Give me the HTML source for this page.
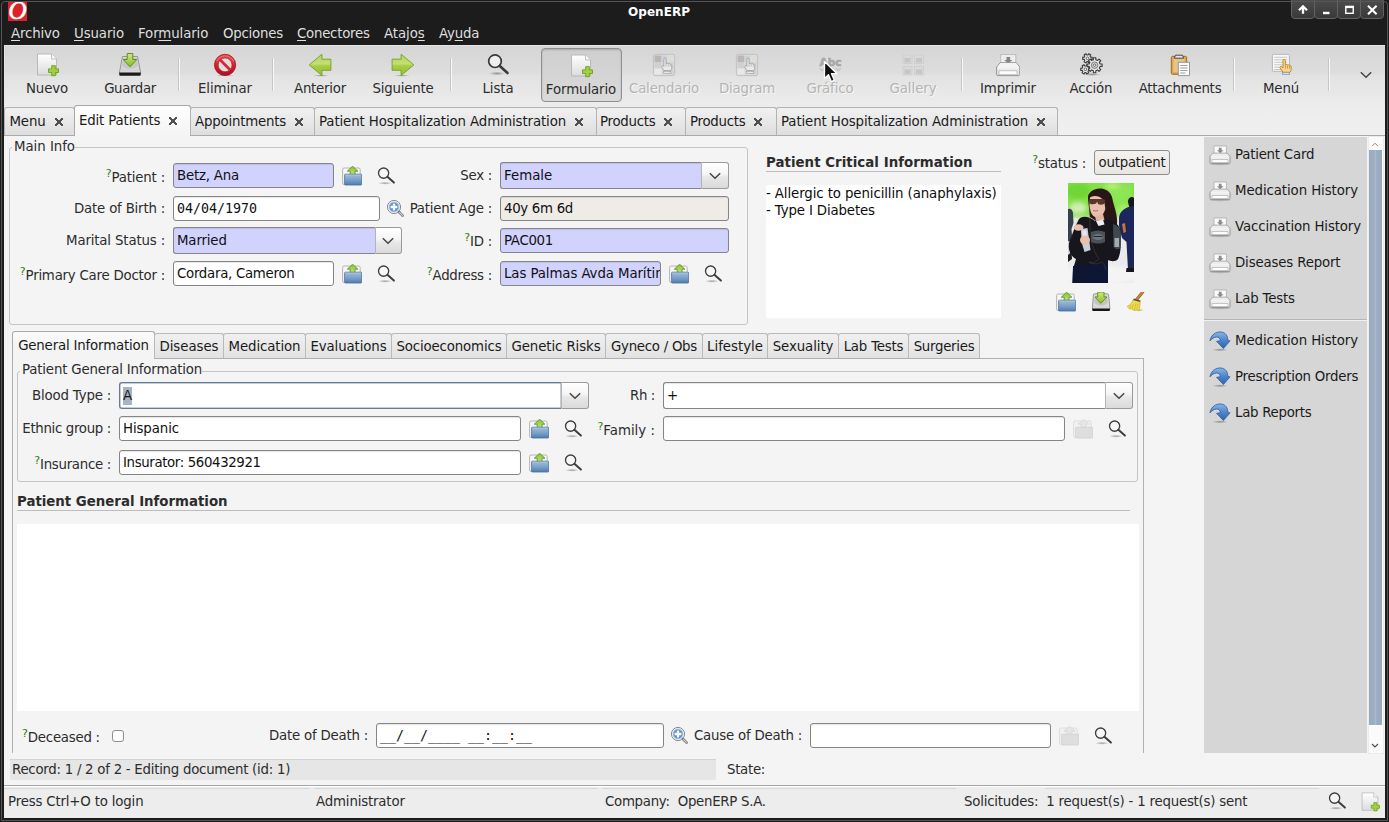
<!DOCTYPE html>
<html lang="es">
<head>
<meta charset="utf-8">
<title>OpenERP</title>
<style>
html,body{margin:0;padding:0}
body{width:1389px;height:822px;overflow:hidden;background:#1c1c1c;position:relative;font-family:"DejaVu Sans","Liberation Sans",sans-serif;font-size:13.33px;color:#1a1a1a;letter-spacing:0;word-spacing:0}
.a{position:absolute}
.t{position:absolute;white-space:nowrap;line-height:16px;height:16px;margin-top:1px;color:#2c2c2c}
.r{text-align:right}
.b{font-weight:bold}
.q{color:#2b7d12;font-size:11px;position:relative;top:-5px;letter-spacing:0}
#win{position:absolute;left:4px;top:45px;width:1381px;height:773px;background:#f4f4f4}
/* menubar */
.mi{position:absolute;top:26px;color:#dfdfdf;white-space:nowrap;line-height:16px}
.mi u{text-decoration:underline;text-underline-offset:1.500px}
/* toolbar */
#tb{position:absolute;left:4px;top:45px;width:1381px;height:91px;box-shadow:inset 1px 1px 0 #e6e6e6;background:linear-gradient(#d5d5d5 0,#dedede 29px,#e2e2e2 30px,#ececec 60px,#f0f0f0 91px)}
.tl{position:absolute;top:79px;width:120px;text-align:center;white-space:nowrap;line-height:17px;color:#2c2c2c}
.tl.d{color:#b4b4b4;text-shadow:1px 1px 0 #f6f6f6}
.sep{position:absolute;top:58px;width:1px;height:33px;background:#c6c6c6;box-shadow:1px 0 0 #f8f8f8}
/* tabs */
.tab{position:absolute;top:107px;height:28px;box-sizing:border-box;border:1px solid #b3b3b3;border-bottom:none;border-radius:3px 3px 0 0;background:linear-gradient(#f1f1f1,#dedede)}
.tab.act{top:105px;height:31px;background:linear-gradient(#fdfdfd,#f4f4f4);border-color:#a9a9a9}
.tab{white-space:nowrap;padding:6px 0 0 4px;line-height:16px}
.tab span{white-space:nowrap;line-height:16px}
.tab.act{padding-top:7px}
.tab i{display:inline-block;vertical-align:top;margin:4px 0 0 9px;opacity:.9;width:8px;height:8px;background:linear-gradient(45deg,transparent 43%,#404040 43%,#404040 57%,transparent 57%),linear-gradient(-45deg,transparent 43%,#404040 43%,#404040 57%,transparent 57%)}

/* inputs */
.in{position:absolute;box-sizing:border-box;border:1px solid #858585;border-radius:3px;background:#fff;box-shadow:inset 0 1px 1px rgba(0,0,0,.10)}
.in.p{background:#d2d2ff}
.in.g{background:#efebe7}
.in span{position:absolute;left:3px;top:4px;white-space:nowrap;line-height:16px;color:#101010}
.cb{position:absolute;box-sizing:border-box;border:1px solid #9a9a9a;border-left-color:#b5b5b5;border-radius:0 3px 3px 0;background:linear-gradient(#ffffff 0,#f5f5f5 45%,#e8e8e8 55%,#dadada 100%)}
.fr{position:absolute;box-sizing:border-box;border:1px solid #c4c4c4;border-radius:3px}
.nt{position:absolute;top:333px;padding-top:2px;height:25px;box-sizing:border-box;border:1px solid #b9b9b9;border-bottom:none;border-radius:3px 3px 0 0;background:linear-gradient(#f0f0f0,#e2e2e2);text-align:center;line-height:22px;white-space:nowrap}
.nt.act{top:331px;height:28px;background:linear-gradient(#fbfbfb,#f4f4f4 60%);line-height:24px;border-color:#aaa}
.sb{position:absolute;left:1235px;white-space:nowrap;line-height:16px;margin-top:1px}
</style>
</head>
<body>
<svg width="0" height="0" style="position:absolute">
<defs>
<linearGradient id="gfold" x1="0" y1="0" x2="0" y2="1"><stop offset="0" stop-color="#b2c8e0"/><stop offset=".12" stop-color="#9ab7d8"/><stop offset=".55" stop-color="#7a9fc8"/><stop offset="1" stop-color="#507cae"/></linearGradient>
<linearGradient id="ggrn" x1="0" y1="0" x2="0" y2="1"><stop offset="0" stop-color="#84c030"/><stop offset="1" stop-color="#d0e57a"/></linearGradient>
<linearGradient id="ggrn2" x1="0" y1="0" x2="0" y2="1"><stop offset="0" stop-color="#d2e87c"/><stop offset="1" stop-color="#86bd2c"/></linearGradient>
<linearGradient id="gpap" x1="0" y1="0" x2="0" y2="1"><stop offset="0" stop-color="#ffffff"/><stop offset="1" stop-color="#dcdcdc"/></linearGradient>
<linearGradient id="gjump" x1="0" y1="0" x2="0" y2="1"><stop offset="0" stop-color="#86b6ea"/><stop offset=".5" stop-color="#4f86cc"/><stop offset="1" stop-color="#2f62a8"/></linearGradient>
<linearGradient id="gred" x1="0" y1="0" x2="0" y2="1"><stop offset="0" stop-color="#ec4a4a"/><stop offset=".55" stop-color="#d4202c"/><stop offset="1" stop-color="#ad0e26"/></linearGradient>
<linearGradient id="ggrn3" x1="0" y1="0" x2="0" y2="1"><stop offset="0" stop-color="#b5d354"/><stop offset=".45" stop-color="#c6de72"/><stop offset=".55" stop-color="#a9cb45"/><stop offset="1" stop-color="#98bf36"/></linearGradient>
<radialGradient id="gsh"><stop offset="0" stop-color="#000" stop-opacity=".35"/><stop offset="1" stop-color="#000" stop-opacity="0"/></radialGradient>
<symbol id="folder" viewBox="0 0 20 20">
 <rect x=".6" y="2" width="17.600" height="16.500" rx="1.500" fill="#f6f6f6" stroke="#aeaeae" stroke-width=".9"/>
 <path d="M10.600 .2 L15.900 5.200 H13 V9.500 H8.200 V5.200 H5.300 Z" fill="url(#ggrn)" stroke="#4f8f14" stroke-width=".8" stroke-linejoin="round"/>
 <path d="M3.300 8.200 H19 a.7 .7 0 0 1 .7 .7 V18.300 a.7 .7 0 0 1 -.7 .7 H3.300 a.7 .7 0 0 1 -.7 -.7 V8.900 a.7 .7 0 0 1 .7 -.7Z" fill="url(#gfold)" stroke="#46709f" stroke-width=".8"/>
 <path d="M3.300 9.100 H19" stroke="#b9d0ea" stroke-width=".7" opacity=".8"/>
</symbol>
<symbol id="folderd" viewBox="0 0 20 20">
 <rect x=".6" y="2" width="17.600" height="16.500" rx="1.500" fill="#f1f1f1" stroke="#dadada" stroke-width=".9"/>
 <path d="M10.600 .3 L16.200 5.200 H13 V9.500 H8.200 V5.200 H5 Z" fill="#e6e6e6" stroke="#d6d6d6" stroke-width=".7"/>
 <path d="M3.300 8.200 H19 a.7 .7 0 0 1 .7 .7 V18.300 a.7 .7 0 0 1 -.7 .7 H3.300 a.7 .7 0 0 1 -.7 -.7 V8.900 a.7 .7 0 0 1 .7 -.7Z" fill="#dedede" stroke="#d0d0d0" stroke-width=".8"/>
</symbol>
<symbol id="find" viewBox="0 0 20 20">
 <ellipse cx="9" cy="17.200" rx="7" ry="1.500" fill="url(#gsh)"/>
 <circle cx="7.600" cy="7.100" r="5.100" fill="#f8f8f8" fill-opacity=".8" stroke="#3e3e3e" stroke-width="1.350"/>
 <path d="M11.400 10.800 L17.900 16.600" stroke="#3e3e3e" stroke-width="2" stroke-linecap="round"/>
</symbol>
<symbol id="zoomp" viewBox="0 0 18 18">
 <circle cx="8" cy="8" r="6.600" fill="#eef2f8" stroke="#8a8a8a" stroke-width="1"/>
 <circle cx="8" cy="8" r="4.800" fill="#5d8fd0"/>
 <circle cx="8" cy="8" r="4.800" fill="none" stroke="#9cbbe6" stroke-width=".8"/>
 <path d="M8 4.600v6.800M4.600 8h6.800" stroke="#fff" stroke-width="2.300"/>
 <path d="M13 13 L16.600 16.600" stroke="#757575" stroke-width="2.600" stroke-linecap="round"/>
 <path d="M13.300 13.300 L16.400 16.400" stroke="#d2d2d2" stroke-width="1.100" stroke-linecap="round"/>
</symbol>
<symbol id="chev" viewBox="0 0 12 8"><path d="M0.800 1.200 L6 6.200 L11.200 1.200" fill="none" stroke="#454545" stroke-width="1.500"/></symbol>
<symbol id="print" viewBox="0 0 24 24">
 <path d="M4.800 1.700h15v10.500h-15z" fill="#fbfbfb" stroke="#b0b0b0" stroke-width=".9"/>
 <path d="M6 3h12.600v7h-12.600z" fill="#ececec"/>
 <path d="M10.500 4h3.600v3h2.300L12.300 10.600 8.200 7h2.300z" fill="#858585"/>
 <path d="M.6 14 L4.200 9.700 H20.300 L23.800 14 V21.300 a1.300 1.300 0 0 1 -1.300 1.300 H1.900 a1.300 1.300 0 0 1 -1.300 -1.300z" fill="url(#gpap)" stroke="#8a8a8a" stroke-width=".9"/>
 <path d="M4.500 10.300 H20 L22.800 13.700 H1.700z" fill="#f4f4f4"/>
 <path d="M3 17.700h18v4h-18z" fill="#fdfdfd" stroke="#b4b4b4" stroke-width=".8"/>
</symbol>
<symbol id="jump" viewBox="0 0 24 24">
 <ellipse cx="12" cy="21.800" rx="8" ry="1.500" fill="url(#gsh)"/>
 <path d="M2 12.800 C3 6 9 3.500 13 4 C17.500 4.500 20 8 19.800 12.600 L22 12.800 L15.400 20.600 L8.600 13.300 L12.300 12.800 C12.500 10.500 10.500 8.800 8.500 9 C6 9.200 3.500 10.800 2 12.800 Z" fill="url(#gjump)" stroke="#2c5c9f" stroke-width=".8" stroke-linejoin="round"/>
</symbol>

<symbol id="newdoc" viewBox="0 0 24 24">
 <path d="M2.500 1 H16.500 L21.500 6 V22 H2.500 Z" fill="url(#gpap)" stroke="#b4b4b4" stroke-width=".9"/>
 <path d="M16.500 1 V6 H21.500" fill="#f6f6f6" stroke="#b4b4b4" stroke-width=".8"/>
 <path d="M16.700 12.700 h3.600 v3.200 h3.200 v3.600 h-3.200 v3.200 h-3.600 v-3.200 h-3.200 v-3.600 h3.200 z" fill="#a4d040" stroke="#66a018" stroke-width=".9"/>
</symbol>
<symbol id="save" viewBox="0 0 24 24">
 <path d="M4.500 3.500 H19.500 L22.500 19 V21 H1.500 V19 Z" fill="#d8d8d8" stroke="#8e8e8e" stroke-width=".9"/>
 <path d="M5.500 5 H18.500 L20.800 17.500 H3.200 Z" fill="#c6c6c6"/>
 <path d="M4 12 C6 17 18 17 20 12 L20.800 17.500 H3.200z" fill="#d6d6d6"/>
 <path d="M1.300 19.500 H22.700 V22 a.8 .8 0 0 1 -.8 .8 H2.100 a.8 .8 0 0 1 -.8 -.8 Z" fill="#1a1a1a"/>
 <path d="M9.200 0.500 H14.800 V6.500 H18.800 L12 13.800 L5.200 6.500 H9.200 Z" fill="url(#ggrn2)" stroke="#4e8a0e" stroke-width=".9"/>
</symbol>
<symbol id="stop" viewBox="0 0 24 24">
 <ellipse cx="12" cy="22.300" rx="9" ry="1.300" fill="url(#gsh)"/>
 <circle cx="12.100" cy="11.900" r="10.600" fill="url(#gred)" stroke="#a40d20" stroke-width=".8"/>
 <circle cx="12.100" cy="11.900" r="6.900" fill="#dedede" stroke="#b81224" stroke-width=".6"/>
 <path d="M7.300 7 L17 16.700" stroke="#d42a33" stroke-width="2.800"/>
 <path d="M3.600 8.500 A9.300 9.300 0 0 1 20.600 8.500" fill="none" stroke="#f58a8a" stroke-width="1.100" opacity=".6"/>
</symbol>
<symbol id="aleft" viewBox="0 0 24 24">
 <ellipse cx="13" cy="22.600" rx="8" ry="1.100" fill="url(#gsh)"/>
 <path d="M1.200 11.900 L13.900 1.200 V6.200 H22.900 V17.300 H13.900 V22.500 Z" fill="url(#ggrn3)" stroke="#6da420" stroke-width=".9" stroke-linejoin="round"/>
</symbol>
<symbol id="aright" viewBox="0 0 24 24">
 <ellipse cx="11" cy="22.600" rx="8" ry="1.100" fill="url(#gsh)"/>
 <path d="M22.800 11.900 L10.100 1.200 V6.200 H1.100 V17.300 H10.100 V22.500 Z" fill="url(#ggrn3)" stroke="#6da420" stroke-width=".9" stroke-linejoin="round"/>
</symbol>
<symbol id="find24" viewBox="0 0 24 24">
 <ellipse cx="11" cy="20.500" rx="8" ry="1.800" fill="url(#gsh)"/>
 <circle cx="9" cy="8.200" r="6.300" fill="#f4f4f4" fill-opacity=".75" stroke="#3a3a3a" stroke-width="1.700"/>
 <path d="M13.800 13 L21.500 20" stroke="#3a3a3a" stroke-width="2.600" stroke-linecap="round"/>
</symbol>
<symbol id="gridhand" viewBox="0 0 24 24">
 <rect x="1.400" y="1.400" width="21.200" height="21.200" rx="1.800" fill="#dedede" stroke="#bdbdbd" stroke-width=".9"/>
 <rect x="2.500" y="2.500" width="6.500" height="6.500" fill="#bdb5b5"/><rect x="9" y="2.500" width="6.500" height="6.500" fill="#cdd0d4"/><rect x="15.500" y="2.500" width="6" height="6.500" fill="#deded8"/>
 <rect x="2.500" y="9" width="6.500" height="6.500" fill="#d0d0d0"/><rect x="9" y="9" width="6.500" height="6.500" fill="#d8d8d8"/><rect x="15.500" y="9" width="6" height="6.500" fill="#d2d4d0"/>
 <rect x="2.500" y="15.500" width="6.500" height="6" fill="#e8e8e8"/><rect x="9" y="15.500" width="6.500" height="6" fill="#dcdedc"/><rect x="15.500" y="15.500" width="6" height="6" fill="#d0d2d4"/>
 <path d="M11.800 6.300 a1.100 1.100 0 0 1 2.200 0 V10.600 l1 -.3 a1 1 0 0 1 1.300 .6 l.8 -.2 a1 1 0 0 1 1.300 .7 l.4 0 a1 1 0 0 1 1 1 V15 a3.500 3.500 0 0 1 -1.300 2.600 H11.800 L9.600 13.800 a1 1 0 0 1 1.500 -1.100 l.7 .8 z" fill="#e9e9e9" stroke="#a3a3a3" stroke-width=".9" stroke-linejoin="round"/>
 <path d="M14 10.800v3M16.200 11v2.800M18.200 11.800v2" stroke="#b0b0b0" stroke-width=".7"/>
 <rect x="11.300" y="18.300" width="7.500" height="2" fill="#efefef" stroke="#a9a9a9" stroke-width=".8"/>
</symbol>
<symbol id="gallery" viewBox="0 0 24 24">
 <g fill="#d9d9d9" stroke="#cdcdcd" stroke-width=".8">
 <rect x="2" y="2" width="9" height="8.500"/><rect x="13.500" y="2" width="9" height="8.500"/>
 <rect x="2" y="13.500" width="9" height="8.500"/><rect x="13.500" y="13.500" width="9" height="8.500"/></g>
 <g fill="#c6c6c6"><rect x="3.500" y="5" width="6" height="4.500"/><rect x="15" y="5" width="6" height="4.500"/><rect x="3.500" y="16.500" width="6" height="4.500"/><rect x="15" y="16.500" width="6" height="4.500"/></g>
</symbol>
<symbol id="gears" viewBox="0 0 24 24">
 <ellipse cx="13" cy="21.500" rx="9" ry="1.500" fill="url(#gsh)"/>
 <g fill="#e9e9e9" stroke="#3a3a3a" stroke-width="1.100" stroke-linejoin="round">
  <path d="M11.62 4.22 L13.06 4.14 L13.06 6.46 L11.62 6.38 L10.95 7.55 L11.73 8.76 L9.73 9.91 L9.07 8.63 L7.73 8.63 L7.07 9.91 L5.07 8.76 L5.85 7.55 L5.18 6.38 L3.74 6.46 L3.74 4.14 L5.18 4.22 L5.85 3.05 L5.07 1.84 L7.07 0.69 L7.73 1.97 L9.07 1.97 L9.73 0.69 L11.73 1.84 L10.95 3.05Z"/>
  <path d="M9.62 15.22 L11.06 15.14 L11.06 17.46 L9.62 17.38 L8.95 18.55 L9.73 19.76 L7.73 20.91 L7.07 19.63 L5.73 19.63 L5.07 20.91 L3.07 19.76 L3.85 18.55 L3.18 17.38 L1.74 17.46 L1.74 15.14 L3.18 15.22 L3.85 14.05 L3.07 12.84 L5.07 11.69 L5.73 12.97 L7.07 12.97 L7.73 11.69 L9.73 12.84 L8.95 14.05Z"/>
  <path d="M21.07 11.00 L23.10 10.97 L23.10 13.43 L21.07 13.40 L20.32 15.22 L21.77 16.64 L20.04 18.37 L18.62 16.92 L16.80 17.67 L16.83 19.70 L14.37 19.70 L14.40 17.67 L12.58 16.92 L11.16 18.37 L9.43 16.64 L10.88 15.22 L10.13 13.40 L8.10 13.43 L8.10 10.97 L10.13 11.00 L10.88 9.18 L9.43 7.76 L11.16 6.03 L12.58 7.48 L14.40 6.73 L14.37 4.70 L16.83 4.70 L16.80 6.73 L18.62 7.48 L20.04 6.03 L21.77 7.76 L20.32 9.18Z"/>
 </g>
 <circle cx="8.400" cy="5.300" r="1.300" fill="#fafafa" stroke="#414141" stroke-width=".8"/>
 <circle cx="6.400" cy="16.300" r="1.300" fill="#fafafa" stroke="#414141" stroke-width=".8"/>
 <circle cx="15.600" cy="12.200" r="3.300" fill="#cfcfcf" stroke="#6a6a6a" stroke-width=".8"/>
 <circle cx="15.600" cy="12.200" r="1.200" fill="#fafafa" stroke="#414141" stroke-width=".7"/>
</symbol>
<symbol id="clip" viewBox="0 0 24 24">
 <rect x="3.300" y="3.300" width="15.400" height="18" rx="1.500" fill="#d9a556" stroke="#a66e14" stroke-width="1"/>
 <rect x="5.300" y="5.300" width="11.400" height="14" fill="#e6c488"/>
 <path d="M7.500 2.200 h7 l1.200 3 h-9.400z" fill="#e4e4e4" stroke="#4a4a4a" stroke-width="1"/>
 <path d="M10.300 9.300 H21.500 V22.600 H10.300 Z" fill="#fafafa" stroke="#8e8e8e" stroke-width=".9"/>
 <path d="M12.300 12.500h7.200M12.300 15h7.200M12.300 17.500h7.200M12.300 20h5" stroke="#a0a0a0" stroke-width="1"/>
</symbol>
<symbol id="menuic" viewBox="0 0 24 24">
 <rect x="3.400" y="1.300" width="17" height="17" rx="1.200" fill="#f7f7f7" stroke="#b0b0b0" stroke-width=".9"/>
 <path d="M5.300 4.300h13M5.300 6.800h13M5.300 9.300h13M5.300 11.800h13M5.300 14.300h13M5.300 16.500h13" stroke="#c6c9c2" stroke-width="1.100"/>
 <rect x="13.500" y="17.500" width="7" height="3.800" fill="#e6eefa" stroke="#6f9ddc" stroke-width=".9"/>
 <path d="M14 7.600 a1.200 1.200 0 0 1 2.400 0 V11.800 l1 -.3 a1 1 0 0 1 1.300 .6 l.8 -.2 a1 1 0 0 1 1.300 .7 l.4 0 a1 1 0 0 1 1 1 V16.500 a3.500 3.500 0 0 1 -1.300 2.800 H14.200 L11 14.900 a1.100 1.100 0 0 1 1.700 -1.300 l1.300 1.300 z" fill="#f3d49a" stroke="#c98a24" stroke-width="1" stroke-linejoin="round"/>
 <path d="M16.400 12v3.600M18.500 12.300v3.300M20.500 13v2.600" stroke="#c98a24" stroke-width=".8"/>
</symbol>
<symbol id="abc" viewBox="0 0 24 24">
 <text x="1.500" y="12.500" font-family="DejaVu Sans, Liberation Sans, sans-serif" font-weight="bold" font-size="10.500" fill="#ababab" stroke="#a2a2a2" stroke-width=".5">Abc</text>
 <path d="M1.500 15 l2.800 2.500 l2.800 -2.500 M10 15 l2.800 2.500 l2.800 -2.500 M17.500 15 l2.800 2.500 l2.800 -2.500" fill="none" stroke="#c6c6c6" stroke-width="1.600"/>
</symbol>
<symbol id="printsm" viewBox="0 0 22 22">
 <ellipse cx="11" cy="19" rx="10" ry="1.200" fill="#000" opacity=".18"/>
 <path d="M5 1h12.400v9h-12.400z" fill="#fbfbfb" stroke="#b2b2b2" stroke-width=".9"/>
 <path d="M9.800 2.800h2.800v2.500h2L11.200 8.200 8 5.300h1.800z" fill="#8c8c8c"/>
 <path d="M1 11.500 L4 8.200 H18 L21 11.500 V17.500 a1 1 0 0 1 -1 1 H2 a1 1 0 0 1 -1 -1z" fill="url(#gpap)" stroke="#8e8e8e" stroke-width=".9"/>
 <path d="M4 8.700 H18 L20 11 H2z" fill="#ededed"/>
 <path d="M3 14.500h16v3h-16z" fill="#fdfdfd" stroke="#b9b9b9" stroke-width=".8"/>
</symbol>
<symbol id="savesm" viewBox="0 0 20 20">
 <path d="M3.600 1.800 H16.400 a1.200 1.200 0 0 1 1.200 1 L18.800 15 V17.500 H1.500 V15 L2.400 2.800 a1.200 1.200 0 0 1 1.200 -1z" fill="#d9d9d9" stroke="#909090" stroke-width=".9"/>
 <path d="M4 4 H16 L17.300 14.500 H2.800 Z" fill="#c4c4c4"/>
 <path d="M3.300 10 C5 15 15 15 16.800 10 L17.300 14.500 H2.800z" fill="#dcdcdc"/>
 <path d="M1.300 16.500 H18.900 V18.300 a.7 .7 0 0 1 -.7 .7 H2 a.7 .7 0 0 1 -.7 -.7 Z" fill="#161616"/>
 <path d="M6.700 0 H13 V5 H15.900 L9.900 11.400 L4 5 H6.700 Z" fill="url(#ggrn2)" stroke="#4e8a0e" stroke-width=".8" stroke-linejoin="round"/>
</symbol>
<symbol id="broom" viewBox="0 0 20 20">
 <ellipse cx="14" cy="18" rx="5" ry="1.200" fill="url(#gsh)"/>
 <path d="M17.900 -.2 L11.300 8" stroke="#9a5c12" stroke-width="3" stroke-linecap="round"/>
 <path d="M17.900 -.2 L11.300 8" stroke="#cd8a2e" stroke-width="1.800" stroke-linecap="round"/>
 <path d="M8.200 7.600 L15.200 9.600 L14.300 18.800 L11.500 17.800 L9 18.600 L6.800 16.800 L4.500 17 L2.200 14.400 C5.500 12.800 7.300 10.500 8.200 7.600z" fill="#eddb52" stroke="#c8ad22" stroke-width=".7" stroke-linejoin="round"/>
 <path d="M6 13.500L4.800 16.500M8.500 12L7 16.500M11 11.500L9.300 18M13 11.500L11.800 17.500" stroke="#cdb42c" stroke-width=".7"/>
 <path d="M8.500 7.300 L15.300 9.300" stroke="#505050" stroke-width="1.700"/>
</symbol>
</defs>
</svg>

<!-- titlebar -->
<div class="a" style="left:8px;top:2px;width:19px;height:19px;background:#d9222a"></div>
<div class="t" style="left:8px;top:0;width:19px;height:22px;line-height:22px;text-align:center;color:#fff;font-family:'Liberation Serif','DejaVu Serif',serif;font-style:italic;font-size:25.500px;letter-spacing:0;margin-top:0;-webkit-text-stroke:.6px #fff">O</div>
<div class="t b" style="left:594px;top:3px;width:130px;text-align:center;color:#fff;font-size:12px;letter-spacing:0.042px">OpenERP</div>
<div class="a" style="left:1291px;top:-2px;width:24px;height:21px;box-sizing:border-box;border:1px solid #626262;border-radius:0 0 4px 4px;background:linear-gradient(#4b4b4b 10%,#393939)"></div>
<div class="a" style="left:1314px;top:-2px;width:24px;height:21px;box-sizing:border-box;border:1px solid #626262;border-radius:0 0 4px 4px;background:linear-gradient(#4b4b4b 10%,#393939)"></div>
<div class="a" style="left:1337px;top:-2px;width:24px;height:21px;box-sizing:border-box;border:1px solid #626262;border-radius:0 0 4px 4px;background:linear-gradient(#4b4b4b 10%,#393939)"></div>
<div class="a" style="left:1360px;top:-2px;width:24px;height:21px;box-sizing:border-box;border:1px solid #626262;border-radius:0 0 4px 4px;background:linear-gradient(#4b4b4b 10%,#393939)"></div>
<svg class="a" style="left:1291px;top:0" width="93" height="19" fill="none" stroke="#fff" stroke-width="2">
<path d="M12 13.800 V7 M8 10.300 L12 6.300 L16 10.300" stroke-width="2.300"/>
<path d="M32 13 h6.500" stroke-width="2.400"/>
<rect x="54.800" y="7" width="7.400" height="6.300" stroke-width="1.400"/><path d="M54.100 6.900h8.800" stroke-width="2.400"/>
<path d="M77 5.800 l8.600 8.400 M85.600 5.800 l-8.600 8.400" stroke-width="2.100"/>
</svg>

<!-- menubar -->
<div class="mi" style="left:11px;letter-spacing:-0.162px"><u>A</u>rchivo</div>
<div class="mi" style="left:74px;letter-spacing:-0.096px"><u>U</u>suario</div>
<div class="mi" style="left:138px;letter-spacing:-0.096px">For<u>m</u>ulario</div>
<div class="mi" style="left:223px;letter-spacing:-0.219px">Opciones</div>
<div class="mi" style="left:297px;letter-spacing:-0.247px"><u>C</u>onectores</div>
<div class="mi" style="left:384px;letter-spacing:-0.055px">Atajo<u>s</u></div>
<div class="mi" style="left:439px;letter-spacing:-0.219px">Ay<u>u</u>da</div>

<div class="a" style="left:1px;top:1px;width:1387px;height:820px;box-sizing:border-box;border-radius:4px 4px 0 0;border:1px solid #555"></div>
<div id="win"></div>
<div class="a" style="left:4px;top:786px;width:1381px;height:32px;background:#ededed"></div>
<div id="tb"></div>
<div class="a" style="left:541px;top:48px;width:81px;height:54px;box-sizing:border-box;border:1px solid #8f8f8f;border-radius:4px;background:linear-gradient(#cfcfcf,#dadada);box-shadow:inset 0 1px 2px rgba(0,0,0,.18)"></div>
<svg class="a" style="left:35px;top:53px" width="24" height="24"><use href="#newdoc"/></svg><div class="tl" style="left:-13px;top:80px;letter-spacing:-0.135px">Nuevo</div>
<svg class="a" style="left:118px;top:53px" width="24" height="24"><use href="#save"/></svg><div class="tl" style="left:70px;top:80px;letter-spacing:-0.364px">Guardar</div>
<svg class="a" style="left:213px;top:53px" width="24" height="24"><use href="#stop"/></svg><div class="tl" style="left:165px;top:80px;letter-spacing:-0.078px">Eliminar</div>
<svg class="a" style="left:308px;top:53px" width="24" height="24"><use href="#aleft"/></svg><div class="tl" style="left:260px;top:80px;letter-spacing:-0.228px">Anterior</div>
<svg class="a" style="left:391px;top:53px" width="24" height="24"><use href="#aright"/></svg><div class="tl" style="left:343px;top:80px;letter-spacing:-0.208px">Siguiente</div>
<svg class="a" style="left:486px;top:53px" width="24" height="24"><use href="#find24"/></svg><div class="tl" style="left:438px;top:80px;letter-spacing:-0.095px">Lista</div>
<svg class="a" style="left:569px;top:54px" width="24" height="24"><use href="#newdoc"/></svg><div class="tl" style="left:521px;top:81px;letter-spacing:-0.096px">Formulario</div>
<svg class="a" style="left:652px;top:53px" width="24" height="24"><use href="#gridhand"/></svg><div class="tl d" style="left:604px;top:80px;letter-spacing:-0.181px">Calendario</div>
<svg class="a" style="left:735px;top:53px" width="24" height="24"><use href="#gridhand"/></svg><div class="tl d" style="left:687px;top:80px;letter-spacing:-0.178px">Diagram</div>
<svg class="a" style="left:818px;top:53px" width="24" height="24"><use href="#abc"/></svg><div class="tl d" style="left:770px;top:80px;letter-spacing:-0.124px">Gráfico</div>
<svg class="a" style="left:901px;top:53px" width="24" height="24"><use href="#gallery"/></svg><div class="tl d" style="left:853px;top:80px;letter-spacing:-0.069px">Gallery</div>
<svg class="a" style="left:996px;top:53px" width="24" height="24"><use href="#print"/></svg><div class="tl" style="left:948px;top:80px;letter-spacing:-0.093px">Imprimir</div>
<svg class="a" style="left:1079px;top:53px" width="24" height="24"><use href="#gears"/></svg><div class="tl" style="left:1031px;top:80px;letter-spacing:-0.182px">Acción</div>
<svg class="a" style="left:1168px;top:53px" width="24" height="24"><use href="#clip"/></svg><div class="tl" style="left:1120px;top:80px;letter-spacing:-0.213px">Attachments</div>
<svg class="a" style="left:1269px;top:53px" width="24" height="24"><use href="#menuic"/></svg><div class="tl" style="left:1221px;top:80px;letter-spacing:-0.152px">Menú</div>
<div class="sep" style="left:178px"></div><div class="sep" style="left:272px"></div><div class="sep" style="left:450px"></div><div class="sep" style="left:961px"></div><div class="sep" style="left:1233px"></div><div class="sep" style="left:1328px"></div>
<svg class="a" style="left:1360px;top:71px" width="12" height="8"><use href="#chev"/></svg>

<div class="a" style="left:4px;top:135px;width:1381px;height:1px;background:#a9a9a9"></div>
<div class="tab" style="left:4px;width:71px"><span style="margin-left:.5px;letter-spacing:-0.152px">Menu</span><i></i></div>
<div class="tab act" style="left:74px;width:117px"><span style="letter-spacing:-0.156px">Edit Patients</span><i></i></div>
<div class="tab" style="left:190px;width:125px"><span style="letter-spacing:-0.200px">Appointments</span><i></i></div>
<div class="tab" style="left:314px;width:283px"><span style="letter-spacing:-0.108px">Patient Hospitalization Administration</span><i></i></div>
<div class="tab" style="left:596px;width:90px"><span style="margin-left:-1px;letter-spacing:-0.262px">Products</span><i></i></div>
<div class="tab" style="left:685px;width:92px"><span style="letter-spacing:-0.262px">Products</span><i></i></div>
<div class="tab" style="left:776px;width:282px"><span style="letter-spacing:-0.108px">Patient Hospitalization Administration</span><i></i></div>

<div class="fr" style="left:9px;top:147px;width:739px;height:178px"></div>
<div class="t" style="left:12px;top:138px;background:#f4f4f4;padding:0 0 0 2px;letter-spacing:-0.033px">Main Info</div>
<div class="t r" style="left:-35px;width:200px;top:169px;letter-spacing:-0.195px"><span class="q">?</span>Patient :</div>
<div class="in p" style="left:173px;top:163px;width:161px;height:25px;"><span style="letter-spacing:-0.199px">Betz, Ana</span></div>
<svg class="a" style="left:342px;top:166px" width="20" height="20"><use href="#folder"/></svg>
<svg class="a" style="left:376px;top:166px" width="20" height="20"><use href="#find"/></svg>
<div class="t r" style="left:-35px;width:200px;top:200px;letter-spacing:-0.196px">Date of Birth :</div>
<div class="in " style="left:173px;top:196px;width:207px;height:25px;font-family:'DejaVu Sans Mono','Liberation Mono',monospace"><span style="letter-spacing:-0.027px">04/04/1970</span></div>
<svg class="a" style="left:386px;top:199px" width="18" height="18"><use href="#zoomp"/></svg>
<div class="t r" style="left:-35px;width:200px;top:232px;letter-spacing:-0.151px">Marital Status :</div>
<div class="in p" style="left:173px;top:227px;width:202px;height:27px;border-radius:3px 0 0 3px;border-right:none"><span style="top:5px;letter-spacing:-0.144px">Married</span></div>
<div class="cb" style="left:375px;top:227px;width:27px;height:27px"></div><svg class="a" style="left:382px;top:237px" width="12" height="8"><use href="#chev"/></svg>
<div class="t r" style="left:-35px;width:200px;top:267px;letter-spacing:-0.226px"><span class="q">?</span>Primary Care Doctor :</div>
<div class="in " style="left:173px;top:261px;width:161px;height:25px;"><span style="letter-spacing:-0.279px">Cordara, Cameron</span></div>
<svg class="a" style="left:342px;top:264px" width="20" height="20"><use href="#folder"/></svg>
<svg class="a" style="left:376px;top:264px" width="20" height="20"><use href="#find"/></svg>
<div class="t r" style="left:292px;width:200px;top:167px;letter-spacing:-0.257px">Sex :</div>
<div class="in p" style="left:500px;top:162px;width:201px;height:27px;border-radius:3px 0 0 3px;border-right:none"><span style="top:5px;letter-spacing:0.010px">Female</span></div>
<div class="cb" style="left:701px;top:162px;width:28px;height:27px"></div><svg class="a" style="left:709px;top:172px" width="12" height="8"><use href="#chev"/></svg>
<div class="t r" style="left:292px;width:200px;top:200px;letter-spacing:-0.214px">Patient Age :</div>
<div class="in g" style="left:500px;top:196px;width:229px;height:25px;"><span style="letter-spacing:-0.306px">40y 6m 6d</span></div>
<div class="t r" style="left:292px;width:200px;top:233px;letter-spacing:-0.232px"><span class="q">?</span>ID :</div>
<div class="in p" style="left:500px;top:228px;width:229px;height:25px;"><span style="letter-spacing:-0.320px">PAC001</span></div>
<div class="t r" style="left:292px;width:200px;top:267px;letter-spacing:-0.262px"><span class="q">?</span>Address :</div>
<div class="in p" style="left:500px;top:261px;width:161px;height:25px;overflow:hidden"><span style="letter-spacing:-0.094px">Las Palmas Avda Marítin</span></div>
<svg class="a" style="left:669px;top:264px" width="20" height="20"><use href="#folder"/></svg>
<svg class="a" style="left:703px;top:264px" width="20" height="20"><use href="#find"/></svg>
<div class="t b" style="left:766px;top:154px;letter-spacing:0.046px">Patient Critical Information</div>
<div class="a" style="left:766px;top:171px;width:235px;height:1px;background:#bdbdbd"></div>
<div class="a" style="left:766px;top:185px;width:235px;height:133px;background:#fff"></div>
<div class="t " style="color:#0c0c0c;left:766px;top:185px;letter-spacing:-0.097px">- Allergic to penicillin (anaphylaxis)</div>
<div class="t " style="color:#0c0c0c;left:766px;top:202px;letter-spacing:-0.138px">- Type I Diabetes</div>
<div class="t r" style="left:886px;width:200px;top:155px;letter-spacing:-0.212px"><span class="q">?</span>status :</div>
<div class="a" style="left:1094px;top:150px;width:76px;height:25px;box-sizing:border-box;border:1px solid #8c8c8c;border-radius:3px;background:linear-gradient(#f4f1ee,#e9e5e1);text-align:center;line-height:24px;letter-spacing:-0.228px">outpatient</div>
<svg class="a" style="left:1068px;top:183px" width="66" height="100" viewBox="0 0 66 100">
<defs><filter id="bl" x="-5%" y="-5%" width="110%" height="110%"><feGaussianBlur stdDeviation=".55"/></filter>
<filter id="bl2" x="-20%" y="-20%" width="140%" height="140%"><feGaussianBlur stdDeviation="2.200"/></filter>
<clipPath id="pc"><rect width="66" height="100"/></clipPath></defs>
<g clip-path="url(#pc)">
<rect width="66" height="100" fill="#ebebed"/>
<rect width="66" height="35" fill="#84e048"/>
<g filter="url(#bl2)">
<ellipse cx="10" cy="8" rx="12" ry="8" fill="#6fd636"/><ellipse cx="52" cy="10" rx="12" ry="10" fill="#8de653"/><ellipse cx="56" cy="28" rx="8" ry="7" fill="#a6ec72"/>
<ellipse cx="10" cy="25" rx="9" ry="6" fill="#cdeeb0"/><ellipse cx="44" cy="3" rx="8" ry="3" fill="#b6f07e"/>
<rect x="-2" y="34" width="70" height="7" fill="#e3e8e0"/>
<ellipse cx="30" cy="92" rx="40" ry="10" fill="#f4f4f5"/>
</g>
<g filter="url(#bl)">
<path d="M0 26 q4 -1 5 4 l.5 10 l-2 6 l1 12 l-4.500 2z" fill="#39414e"/>
<path d="M0 58 l3 1 l1 14 l-4 4z" fill="#d8dadf"/>
<path d="M0 72 l3.500 -3 l.5 7 l-4 3z" fill="#1c1c20"/>
<path d="M60 19 c0 -6 6 -6 6.500 -3 v9 h-5z" fill="#17171b"/>
<path d="M51 36 c0 -8 6 -12 15 -13 V88 l-6 -1 l-1.500 -28 l-4.500 -4 l-3 -12z" fill="#1a2758"/>
<path d="M54 41 l3 -1 l1 9 l-2.500 1z" fill="#c7763a"/>
<path d="M58.500 85 h7.500 v4 h-8z" fill="#15151a"/>
<path d="M20 16 C19 4 40 1 44 14 C46 24 50 32 49 41 L34 42 L22 34 Z" fill="#2a1913"/>
<path d="M22 14 C26 10 33 11 36 14 L37.500 24 C37 30 33 34.500 29 34.500 C25 34.500 21.500 29 21.500 22 Z" fill="#e9bfae"/>
<path d="M20.500 12 C25 5 38 6 41 15 L42 30 L37 24 C37 17 33 13 27 13 C24 13 22 14 20.500 16z" fill="#2a1913"/>
<path d="M21 16 h14.500 l1.500 1 l-1 4 q-3 1.500 -6 0 l-.8 -2.500 l-1.200 2 q-3 1.500 -6 .3z" fill="#5a342a"/>
<path d="M25 27.500 q3 1 5 0" stroke="#c0626a" stroke-width="1" fill="none"/>
<path d="M27 33 l8 -2 l2 8 l-8 3z" fill="#e2b5a2"/>
<path d="M11 36 C15 32 22 34 27 38 L36 37 C44 35 52 41 53 50 L52.500 66 C52 72 50 77 49 77 C46 79 42 78 40 77 L40 100 L4.500 100 L5 86 L8 76 C2 73 0 66 1 60 L7 44 Z" fill="#15171c"/>
<path d="M5 83 L40 79 L40 100 L4.500 100z" fill="#0e1330"/>
<path d="M28 38 l7 -1.500 l1.500 5 l-6 1.500z" fill="#eceef0"/>
<path d="M23 49 q7 -3 14 0 v10 q-7 3 -14 0z" fill="#4b5158"/>
<ellipse cx="30" cy="54" rx="5.500" ry="3" fill="#6e757d"/>
<path d="M25.500 53.500h9" stroke="#23262b" stroke-width="1"/>
<path d="M45 41 q8 2 8 12 l-.5 12 q-4 3 -7 -1z" fill="#41464e"/>
<path d="M46.500 55 h4.500 v9 h-4.500z" fill="#a4aab2"/>
<path d="M13 46 l6.500 -1 l3 22 l-6 2 l-3 -10z" fill="#c6ced9"/>
<path d="M14 48 l4 -1 l2 12 l-4 1z" fill="#e4e9ef"/>
<ellipse cx="10.500" cy="44.500" rx="5" ry="3.300" fill="#e9bfae"/>
<ellipse cx="17" cy="57" rx="5" ry="4.500" fill="#e9bfae"/>
<path d="M22 26 q-1 16 1 30 q3 14 8 20 q-6 6 -10 3 q6 4 13 0 q3 2 4 8" fill="none" stroke="#4a4a4a" stroke-width=".5"/>
</g></g></svg>
<svg class="a" style="left:1056px;top:292px" width="20" height="20"><use href="#folder"/></svg>
<svg class="a" style="left:1091px;top:292px" width="20" height="20"><use href="#savesm"/></svg>
<svg class="a" style="left:1125px;top:292px" width="20" height="20"><use href="#broom"/></svg>
<div class="a" style="left:12px;top:358px;width:1132px;height:395px;box-sizing:border-box;border:1px solid #b0b0b0;border-bottom:none"></div>
<div class="nt act" style="left:12px;width:143px;letter-spacing:-0.168px">General Information</div>
<div class="nt" style="left:154px;width:70px;letter-spacing:-0.048px">Diseases</div>
<div class="nt" style="left:223px;width:83px;letter-spacing:-0.091px">Medication</div>
<div class="nt" style="left:305px;width:87px;letter-spacing:-0.118px">Evaluations</div>
<div class="nt" style="left:391px;width:116px;letter-spacing:-0.149px">Socioeconomics</div>
<div class="nt" style="left:506px;width:100px;letter-spacing:-0.098px">Genetic Risks</div>
<div class="nt" style="left:605px;width:98px;letter-spacing:-0.270px">Gyneco / Obs</div>
<div class="nt" style="left:702px;width:66px;letter-spacing:-0.000px">Lifestyle</div>
<div class="nt" style="left:767px;width:72px;letter-spacing:-0.078px">Sexuality</div>
<div class="nt" style="left:838px;width:71px;letter-spacing:-0.196px">Lab Tests</div>
<div class="nt" style="left:908px;width:72px;letter-spacing:-0.266px">Surgeries</div>
<div class="fr" style="left:17px;top:371px;width:1121px;height:111px"></div>
<div class="t" style="left:20px;top:361px;background:#f4f4f4;padding:0 0 0 2px;letter-spacing:-0.165px">Patient General Information</div>
<div class="t r" style="left:-89px;width:200px;top:387px;letter-spacing:-0.192px">Blood Type :</div>
<div class="in " style="left:119px;top:382px;width:442px;height:27px;border-radius:3px 0 0 3px;border-right:none;border-color:#677b93;box-shadow:inset 0 0 0 .5px #8a9bb0"><span style="top:5px;letter-spacing:-0.121px"><b style="font-weight:normal;background:#a8b4c4;color:#1a1a1a;padding:1px 0 1.500px">A</b></span></div>
<div class="cb" style="left:561px;top:382px;width:28px;height:27px"></div><svg class="a" style="left:569px;top:392px" width="12" height="8"><use href="#chev"/></svg>
<div class="t r" style="left:455px;width:200px;top:387px;letter-spacing:-0.361px">Rh :</div>
<div class="in " style="left:663px;top:382px;width:442px;height:27px;border-radius:3px 0 0 3px;border-right:none"><span style="top:5px;letter-spacing:-0.172px">+</span></div>
<div class="cb" style="left:1105px;top:382px;width:28px;height:27px"></div><svg class="a" style="left:1113px;top:392px" width="12" height="8"><use href="#chev"/></svg>
<div class="t r" style="left:-89px;width:200px;top:420px;letter-spacing:-0.327px">Ethnic group :</div>
<div class="in " style="left:119px;top:416px;width:402px;height:25px;"><span style="letter-spacing:-0.099px">Hispanic</span></div>
<svg class="a" style="left:529px;top:419px" width="20" height="20"><use href="#folder"/></svg>
<svg class="a" style="left:563px;top:419px" width="20" height="20"><use href="#find"/></svg>
<div class="t r" style="left:455px;width:200px;top:422px;letter-spacing:0.018px"><span class="q">?</span>Family :</div>
<div class="in " style="left:663px;top:416px;width:402px;height:25px;"><span></span></div>
<svg class="a" style="left:1073px;top:419px" width="20" height="20"><use href="#folderd"/></svg>
<svg class="a" style="left:1107px;top:419px" width="20" height="20"><use href="#find"/></svg>
<div class="t r" style="left:-89px;width:200px;top:456px;letter-spacing:-0.286px"><span class="q">?</span>Insurance :</div>
<div class="in " style="left:119px;top:450px;width:402px;height:25px;"><span style="letter-spacing:-0.369px">Insurator: 560432921</span></div>
<svg class="a" style="left:529px;top:453px" width="20" height="20"><use href="#folder"/></svg>
<svg class="a" style="left:563px;top:453px" width="20" height="20"><use href="#find"/></svg>
<div class="t b" style="left:17px;top:493px;letter-spacing:-0.002px">Patient General Information</div>
<div class="a" style="left:17px;top:510px;width:1113px;height:1px;background:#bdbdbd"></div>
<div class="a" style="left:17px;top:524px;width:1122px;height:187px;background:#fff"></div>
<div class="t " style="left:22px;top:729px;letter-spacing:-0.252px"><span class="q">?</span>Deceased :</div>
<div class="a" style="left:112px;top:730px;width:12px;height:12px;box-sizing:border-box;border:1px solid #8e8e8e;border-radius:3px;background:#fff"></div>
<div class="t " style="left:269px;top:727px;letter-spacing:-0.216px">Date of Death :</div>
<div class="in " style="left:376px;top:723px;width:288px;height:25px;font-family:'DejaVu Sans Mono','Liberation Mono',monospace"><span style="letter-spacing:-0.027px">__/__/____ __:__:__</span></div>
<svg class="a" style="left:670px;top:726px" width="18" height="18"><use href="#zoomp"/></svg>
<div class="t " style="left:694px;top:727px;letter-spacing:-0.216px">Cause of Death :</div>
<div class="in " style="left:810px;top:723px;width:241px;height:25px;"><span></span></div>
<svg class="a" style="left:1059px;top:726px" width="20" height="20"><use href="#folderd"/></svg>
<svg class="a" style="left:1093px;top:726px" width="20" height="20"><use href="#find"/></svg>

<div class="a" style="left:1204px;top:137px;width:163px;height:616px;background:#d6d6d6"></div>
<svg class="a" style="left:1209px;top:145px" width="22" height="22"><use href="#printsm"/></svg><div class="sb" style="top:146px;letter-spacing:-0.224px">Patient Card</div>
<svg class="a" style="left:1209px;top:181px" width="22" height="22"><use href="#printsm"/></svg><div class="sb" style="top:182px;letter-spacing:-0.088px">Medication History</div>
<svg class="a" style="left:1209px;top:217px" width="22" height="22"><use href="#printsm"/></svg><div class="sb" style="top:218px;letter-spacing:-0.131px">Vaccination History</div>
<svg class="a" style="left:1209px;top:253px" width="22" height="22"><use href="#printsm"/></svg><div class="sb" style="top:254px;letter-spacing:-0.161px">Diseases Report</div>
<svg class="a" style="left:1209px;top:289px" width="22" height="22"><use href="#printsm"/></svg><div class="sb" style="top:290px;letter-spacing:-0.196px">Lab Tests</div>
<div class="a" style="left:1204px;top:319px;width:163px;height:1px;background:#b4b4b4;box-shadow:0 1px 0 #f0f0f0"></div>
<svg class="a" style="left:1208px;top:328px" width="24" height="24"><use href="#jump"/></svg><div class="sb" style="top:332px;letter-spacing:-0.088px">Medication History</div>
<svg class="a" style="left:1208px;top:364px" width="24" height="24"><use href="#jump"/></svg><div class="sb" style="top:368px;letter-spacing:-0.237px">Prescription Orders</div>
<svg class="a" style="left:1208px;top:400px" width="24" height="24"><use href="#jump"/></svg><div class="sb" style="top:404px;letter-spacing:-0.277px">Lab Reports</div>
<div class="a" style="left:1369px;top:137px;width:14px;height:616px;background:#fbfbfb;box-shadow:0 0 0 1px #ebebeb"></div>
<div class="a" style="left:1369px;top:150px;width:13px;height:575px;background:linear-gradient(90deg,#9aabbf,#9eafc3 40%,#aabacb 50%,#9cadc1 60%,#97a9be)"></div>
<svg class="a" style="left:1370px;top:141px" width="10" height="7"><path d="M2 5.200 L5 2.200 L8 5.200" fill="none" stroke="#8c8c8c" stroke-width="1"/></svg>
<svg class="a" style="left:1370px;top:742px" width="10" height="7"><path d="M2 2 L5 5 L8 2" fill="none" stroke="#4c4c4c" stroke-width="1.100"/></svg>

<div class="a" style="left:10px;top:759px;width:706px;height:21px;background:#e6e6e6;border-top:1px solid #d2d2d2;box-sizing:border-box"></div>
<div class="t " style="left:12px;top:761px;letter-spacing:-0.258px">Record: 1 / 2 of 2 - Editing document (id: 1)</div>
<div class="t " style="left:727px;top:761px;letter-spacing:-0.297px">State:</div>
<div class="a" style="left:4px;top:785px;width:1381px;height:1px;background:#a6a6a6;box-shadow:0 1px 0 #fff"></div>
<div class="t " style="left:8px;top:793px;letter-spacing:-0.171px">Press Ctrl+O to login</div>
<div class="t " style="left:316px;top:793px;letter-spacing:-0.163px">Administrator</div>
<div class="t " style="left:605px;top:793px;letter-spacing:-0.274px">Company:&nbsp; OpenERP S.A.</div>
<div class="t " style="left:964px;top:793px;letter-spacing:-0.212px">Solicitudes:&nbsp;&nbsp;1 request(s) - 1 request(s) sent</div>
<svg class="a" style="left:1327px;top:791px" width="20" height="20"><use href="#find"/></svg>
<svg class="a" style="left:1360px;top:792px" width="20" height="20"><use href="#newdoc"/></svg>

<div class="a" style="left:4px;top:788px;width:306px;height:1px;background:#d9d9d9"></div><div class="a" style="left:314px;top:788px;width:284px;height:1px;background:#d9d9d9"></div><div class="a" style="left:602px;top:788px;width:354px;height:1px;background:#d9d9d9"></div><div class="a" style="left:1045px;top:788px;width:274px;height:1px;background:#d9d9d9"></div>
<svg class="a" style="left:823px;top:60px" width="16" height="24" viewBox="0 0 16 24"><path d="M1.500 1.500 V18.500 L5.500 14.800 L8.300 21.500 L11.300 20.200 L8.500 13.700 H14 Z" fill="#111" stroke="#fff" stroke-width="1.300" stroke-linejoin="round"/></svg>
</body>
</html>
